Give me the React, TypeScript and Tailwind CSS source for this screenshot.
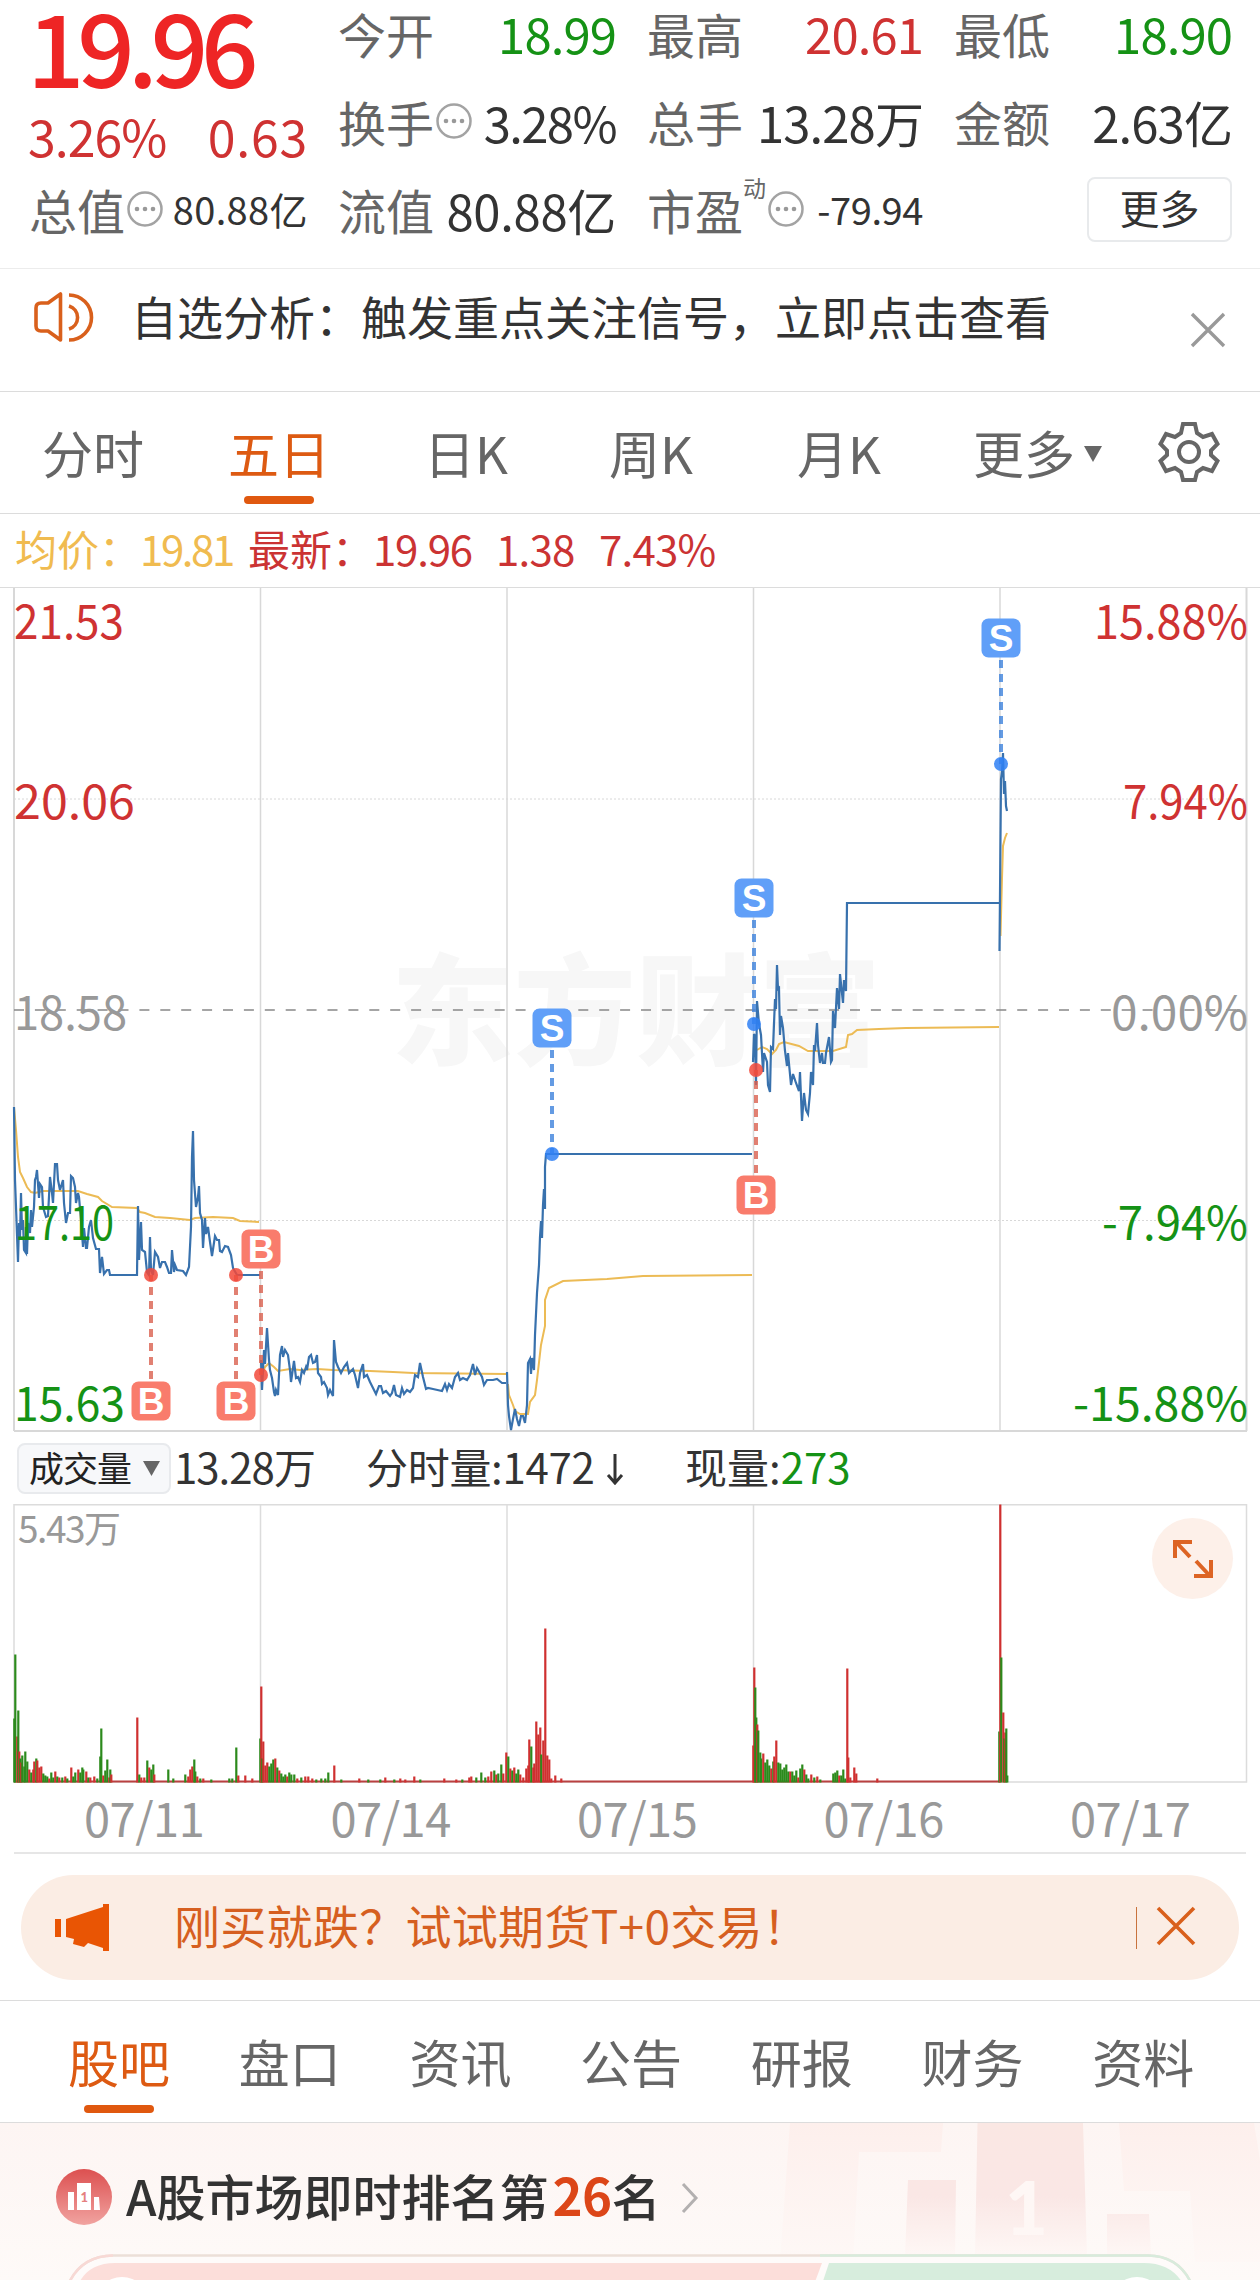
import React from 'react';
import clsx from 'clsx';

type Bar = [number, number, 'r' | 'g'];

const PRICE_LINES = [
  '14,1107 15,1180 16,1207 18,1262 19,1223 20,1237 21,1193 22,1230 23,1220 24,1250 26,1253 26,1227 27,1254 28,1223 30,1233 31,1210 32,1227 34,1207 35,1180 36,1177 37,1170 39,1198 40,1184 42,1187 43,1207 46,1217 48,1216 50,1177 52,1193 53,1203 55,1164 57,1164 58,1180 60,1190 63,1180 64,1203 66,1223 68,1213 70,1213 71,1176 73,1178 75,1187 76,1203 78,1193 79,1197 81,1220 83,1247 84,1228 86,1248 87,1248 89,1227 91,1220 93,1238 96,1249 99,1249 100,1273 102,1257 104,1274 107,1270 109,1270 110,1275 137,1275 138,1206 139,1260 141,1222 142,1250 145,1252 147,1272 149,1275 150,1237 151,1270 153,1275 155,1252 158,1257 160,1268 162,1262 165,1262 167,1267 169,1273 171,1273 172,1250 174,1272 175,1265 177,1270 183,1271 186,1275 189,1267 191,1227 192,1157 193,1131 194,1180 196,1207 198,1197 199,1186 200,1213 202,1220 203,1248 205,1218 206,1234 208,1227 210,1242 212,1256 215,1236 217,1240 219,1240 220,1251 222,1252 225,1246 228,1247 231,1255 233,1268 237,1275 260,1275',
  '261,1360 262,1390 264,1350 265,1364 267,1328 269,1360 270,1370 272,1378 274,1392 275,1396 276,1390 278,1395 280,1355 282,1346 283,1357 285,1350 288,1355 290,1370 291,1382 292,1375 294,1361 296,1378 298,1377 300,1382 302,1370 304,1373 306,1367 307,1370 309,1357 311,1355 313,1363 315,1362 317,1355 318,1373 321,1377 322,1384 324,1382 327,1388 328,1395 330,1390 333,1396 334,1340 336,1362 338,1367 341,1373 344,1367 347,1363 349,1373 353,1369 355,1375 358,1388 360,1373 363,1364 364,1377 367,1375 370,1382 373,1388 376,1394 379,1386 381,1386 383,1393 386,1391 390,1396 392,1393 394,1385 396,1395 400,1397 402,1388 404,1394 407,1390 410,1392 413,1388 415,1375 418,1377 420,1363 423,1377 426,1389 428,1388 433,1389 442,1391 445,1384 447,1390 449,1384 452,1388 455,1377 458,1373 460,1380 463,1378 467,1380 470,1375 473,1364 475,1375 477,1368 482,1377 484,1385 487,1380 493,1380 497,1379 502,1383 506,1383',
  '507,1372 508,1405 509,1416 511,1430 513,1419 515,1409 517,1419 519,1426 521,1416 523,1416 525,1423 527,1405 528,1363 530,1359 531,1374 532,1358 534,1370 535,1335 537,1293 539,1265 540,1237 541,1221 542,1238 543,1205 544,1189 545,1209 545,1167 546,1154 752,1154',
  '753,1062 754,1034 755,1036 756,1085 757,1001 759,1024 761,1035 763,1072 764,1053 767,1062 768,1085 770,1092 771,1047 773,1049 775,999 776,1009 777,965 778,989 779,988 780,1035 781,1016 783,1028 785,1051 787,1066 788,1053 791,1085 793,1074 796,1083 799,1091 800,1072 802,1121 804,1093 806,1110 808,1114 810,1093 811,1072 813,1085 814,1045 815,1051 817,1023 818,1045 820,1063 822,1053 823,1063 825,1063 826,1053 829,1037 831,1062 832,1060 833,1011 835,1028 837,988 839,1009 840,974 843,1003 844,980 846,991 847,903 999,903',
  '999.5,951 1001,779 1002,772 1003,753 1004,794 1005,781 1006,806 1007,811',
];

const AVERAGE_LINES = [
  '14,1107 16,1130 18,1157 20,1172 23,1178 27,1187 31,1192 35,1193 43,1191 78,1191 87,1194 98,1197 102,1201 112,1207 137,1208 140,1212 145,1213 155,1217 170,1218 190,1220 195,1218 213,1217 233,1218 240,1221 259,1222',
  '261,1378 265,1367 269,1363 274,1367 278,1371 290,1369 300,1370 317,1369 333,1370 370,1371 393,1372 413,1373 506,1374',
  '508,1384 509,1395 513,1405 515,1411 520,1414 528,1414 530,1402 535,1395 537,1380 541,1345 545,1326 545,1300 549,1288 563,1281 607,1279 643,1276 752,1275',
  '757,1050 762,1047 767,1049 772,1054 776,1050 779,1044 784,1042 799,1046 808,1051 833,1051 846,1047 848,1035 852,1034 857,1030 879,1029 906,1028 999,1027',
  '1000.5,936 1002,878 1003,846 1005,838 1007,833',
];

const TRADES: { side: 'B' | 'S'; x: number; badge: number; dot: number }[] = [
  { side: 'B', x: 151, badge: 1401, dot: 1275 },
  { side: 'B', x: 236, badge: 1401, dot: 1275 },
  { side: 'B', x: 261, badge: 1249, dot: 1375 },
  { side: 'S', x: 552, badge: 1028, dot: 1154 },
  { side: 'S', x: 754, badge: 898, dot: 1024 },
  { side: 'B', x: 756, badge: 1195, dot: 1070 },
  { side: 'S', x: 1001, badge: 638, dot: 764 },
];

// [text, left, baseline, width, colour]
const AXIS_LABELS: [string, number, number, number, string][] = [
  ['21.53', 14, 639, 110, '#cf3232'],
  ['20.06', 14, 819, 121, '#cf3232'],
  ['18.58', 14, 1030, 113, '#999999'],
  ['17.10', 15, 1240, 99, '#159215'],
  ['15.63', 14, 1421, 111, '#159215'],
  ['15.88%', 1094, 639, 154, '#cf3232'],
  ['7.94%', 1123, 819, 125, '#cf3232'],
  ['0.00%', 1111, 1030, 137, '#999999'],
  ['-7.94%', 1102, 1240, 146, '#159215'],
  ['-15.88%', 1073, 1421, 175, '#159215'],
];

const VOLUME: Bar[] = [
  [14, 64, 'g'], [15, 128, 'g'], [17, 46, 'r'], [18, 72, 'g'], [19, 31, 'r'], [20, 24, 'g'], [21, 20, 'r'], [22, 27, 'g'], [24, 16, 'g'], [25, 31, 'g'], [27, 21, 'g'],
  [29, 13, 'r'], [31, 10, 'g'], [33, 13, 'r'], [34, 21, 'r'], [36, 24, 'g'], [37, 22, 'r'], [39, 15, 'r'], [41, 16, 'r'], [43, 9, 'g'], [45, 7, 'g'], [47, 6, 'g'], [49, 4, 'r'],
  [51, 10, 'g'], [53, 5, 'g'], [55, 11, 'r'], [57, 6, 'g'], [59, 5, 'r'], [62, 5, 'g'], [65, 6, 'r'], [67, 4, 'g'], [71, 15, 'r'], [73, 6, 'g'], [75, 10, 'g'], [78, 13, 'r'], [80, 10, 'g'],
  [82, 15, 'g'], [83, 13, 'g'], [86, 11, 'r'], [88, 5, 'g'], [90, 5, 'r'], [94, 6, 'r'], [97, 4, 'g'], [100, 26, 'g'], [101, 54, 'g'], [103, 7, 'r'], [105, 12, 'g'], [107, 23, 'g'],
  [109, 5, 'r'], [110, 13, 'g'], [111, 8, 'r'], [137, 65, 'r'], [139, 8, 'g'], [141, 5, 'r'], [144, 5, 'r'], [147, 22, 'g'], [149, 15, 'r'], [151, 13, 'g'], [153, 18, 'g'], [154, 8, 'r'],
  [168, 13, 'g'], [173, 4, 'g'], [185, 8, 'g'], [188, 6, 'r'], [190, 13, 'r'], [192, 16, 'r'], [194, 23, 'g'], [195, 11, 'g'], [197, 6, 'r'], [200, 4, 'g'], [203, 4, 'r'], [211, 3, 'g'],
  [229, 4, 'g'], [232, 4, 'g'], [236, 35, 'g'], [238, 7, 'r'], [245, 7, 'r'], [252, 4, 'r'],
  [260, 44, 'g'], [261, 96, 'r'], [262, 24, 'g'], [263, 41, 'r'], [265, 17, 'r'], [267, 20, 'r'], [269, 16, 'g'], [271, 19, 'g'], [273, 23, 'g'], [275, 24, 'r'], [277, 15, 'g'], [279, 12, 'r'],
  [281, 9, 'g'], [283, 6, 'g'], [285, 8, 'g'], [287, 6, 'r'], [289, 10, 'g'], [291, 8, 'g'], [294, 8, 'g'], [297, 4, 'r'], [301, 5, 'g'], [305, 6, 'r'], [308, 6, 'r'], [312, 4, 'r'], [316, 3, 'g'],
  [321, 4, 'g'], [325, 4, 'g'], [328, 10, 'g'], [334, 17, 'r'], [341, 3, 'g'], [359, 4, 'r'], [368, 3, 'g'], [380, 3, 'g'], [385, 5, 'r'], [394, 3, 'g'], [400, 4, 'r'], [405, 3, 'r'],
  [414, 6, 'r'], [420, 3, 'g'], [444, 4, 'r'], [456, 3, 'r'], [462, 3, 'g'], [469, 5, 'r'], [471, 6, 'r'], [476, 5, 'g'], [481, 10, 'g'], [485, 5, 'g'], [488, 6, 'r'], [491, 11, 'r'],
  [494, 12, 'g'], [496, 8, 'r'], [498, 9, 'g'], [501, 18, 'g'], [503, 9, 'r'], [506, 30, 'r'], [508, 26, 'g'], [510, 14, 'r'], [512, 12, 'g'], [514, 15, 'r'], [516, 9, 'g'], [518, 13, 'g'],
  [520, 8, 'r'], [523, 5, 'r'], [526, 14, 'r'], [528, 17, 'r'], [529, 43, 'r'], [531, 36, 'g'], [533, 15, 'r'], [534, 19, 'r'], [536, 61, 'r'], [538, 48, 'r'], [540, 55, 'r'], [541, 28, 'g'],
  [543, 42, 'r'], [545, 154, 'r'], [547, 27, 'r'], [549, 23, 'r'], [551, 4, 'r'], [555, 7, 'r'], [561, 4, 'r'],
  [753, 37, 'r'], [754, 115, 'r'], [755, 95, 'g'], [756, 65, 'g'], [757, 58, 'r'], [758, 52, 'g'], [760, 30, 'g'], [761, 24, 'g'], [763, 29, 'r'], [765, 20, 'g'], [767, 23, 'g'], [769, 17, 'g'],
  [771, 14, 'r'], [773, 21, 'g'], [774, 26, 'r'], [776, 42, 'r'], [778, 20, 'g'], [780, 19, 'g'], [782, 13, 'g'], [784, 15, 'g'], [786, 18, 'g'], [788, 11, 'g'], [790, 11, 'r'], [792, 11, 'g'],
  [794, 7, 'g'], [796, 12, 'g'], [798, 5, 'r'], [800, 14, 'g'], [802, 18, 'g'], [804, 13, 'r'], [806, 8, 'g'], [808, 4, 'g'], [811, 8, 'r'], [814, 5, 'g'], [817, 6, 'r'], [820, 3, 'g'],
  [833, 9, 'g'], [835, 10, 'g'], [837, 12, 'g'], [839, 7, 'r'], [841, 7, 'g'], [843, 13, 'g'], [845, 4, 'g'], [847, 114, 'r'], [848, 25, 'r'], [850, 5, 'r'], [854, 15, 'r'], [856, 9, 'r'], [877, 4, 'r'],
  [999, 51, 'g'], [1000, 278, 'r'], [1001, 125, 'g'], [1003, 70, 'r'], [1004, 44, 'g'], [1005, 50, 'r'], [1006, 54, 'g'], [1007, 7, 'g'],
];

const DAY_EDGES = [260.5, 507, 753.5, 1000];
const DATES = ['07/11', '07/14', '07/15', '07/16', '07/17'];
const INFO_TABS = ['股吧', '盘口', '资讯', '公告', '研报', '财务', '资料'];

export default function App() {
  return (
    <div className="flex h-[2280px] w-[1260px] flex-col overflow-hidden bg-white font-['Noto_Sans_CJK_SC',sans-serif] text-[#333]">
      <QuoteHeader />
      <SignalBar />
      <PeriodTabs />
      <div className="flex h-[74px] items-center border-b border-[#dcdcdc] pb-[6px] pl-[15px] text-[42px] leading-none tracking-[-0.8px] whitespace-nowrap text-[#cb3333]">
        <span className="w-[125px] tracking-normal text-[#f0bb50]">均价：</span>
        <span className="w-[108px] tracking-[-2.4px] text-[#f0bb50]">19.81</span>
        <span className="w-[125px] tracking-normal">最新：</span>
        <span className="w-[123px] tracking-[-1.2px]">19.96</span>
        <span className="w-[103px]">1.38</span>
        <span>7.43%</span>
      </div>
      <PriceChart />
      <VolumeSummary />
      <VolumeChart />
      <div className="mx-[14px] flex h-[71px] items-center border-b-2 border-[#e6e6e6] pb-[3px] text-[47px] leading-none tracking-[-0.5px] text-[#999]">
        {DATES.map((date) => (
          <span key={date} className="w-[246.5px] shrink-0 pl-[70px]">{date}</span>
        ))}
      </div>
      <PromoBanner />
      <InfoTabs />
      <RankPanel />
    </div>
  );
}

function QuoteHeader() {
  return (
    <header className="flex h-[269px] shrink-0 border-b border-[#ececec] pl-[29px] leading-none">
      <div className="w-[279px]">
        <div className="-ml-[2px] flex h-[88px] items-center text-[101px] font-medium tracking-[-7.2px] text-[#ee2525]">19.96</div>
        <div className="-ml-[1px] flex h-[94px] items-center justify-between text-[50px] text-[#cf3232]">
          <span className="tracking-[-1px]">3.26%</span>
          <span className="tracking-[0.8px]">0.63</span>
        </div>
        <div className="flex h-[54px] items-center">
          <Label>总值</Label>
          <MoreDots />
          <span className="ml-auto text-[38px] tracking-[0.4px]">80.88亿</span>
        </div>
      </div>
      <div className="ml-[30px] grid h-[241px] grid-cols-[278px_276px_278px] grid-rows-[65px_112px_64px] gap-x-[31px] text-[49px]">
        <Quote label="今开" value="18.99" className="text-[#159215]" />
        <Quote label="最高" value="20.61" className="text-[#cf3232]" />
        <Quote label="最低" value="18.90" className="text-[#159215]" />
        <Quote label="换手" value="3.28%" className="tracking-[-1.6px]" dots />
        <Quote label="总手" value="13.28万" />
        <Quote label="金额" value="2.63亿" />
        <Quote label="流值" value="80.88亿" className="tracking-[-0.3px]" />
        <div className="flex items-center">
          <Label>市盈</Label>
          <span className="mb-[44px] text-[23px] text-[#666]">动</span>
          <MoreDots />
          <span className="ml-auto text-[38px] tracking-[-0.4px]">-79.94</span>
        </div>
        <button className="flex h-[65px] w-[145px] items-center justify-center self-center justify-self-end rounded-lg border-2 border-[#e8eaec] pb-[4px] text-[40px]">
          更多
        </button>
      </div>
    </header>
  );
}

function Label({ children }: { children: React.ReactNode }) {
  return <span className="text-[48px] text-[#666]">{children}</span>;
}

function Quote({ label, value, className, dots }: { label: string; value: string; className?: string; dots?: boolean }) {
  return (
    <div className="flex items-center whitespace-nowrap">
      <Label>{label}</Label>
      {dots && <MoreDots />}
      <span className={clsx('ml-auto', className, !className?.includes('tracking') && 'tracking-[-0.9px]')}>{value}</span>
    </div>
  );
}

function MoreDots() {
  return (
    <svg className="ml-[2px] h-[36px] w-[36px] shrink-0" viewBox="0 0 36 36">
      <circle cx="18" cy="18" r="16.5" fill="none" stroke="#a3a3a3" strokeWidth="2.5" />
      <g fill="#999">
        <circle cx="10" cy="18" r="2.3" />
        <circle cx="18" cy="18" r="2.3" />
        <circle cx="26" cy="18" r="2.3" />
      </g>
    </svg>
  );
}

function SignalBar() {
  return (
    <section className="flex h-[123px] shrink-0 items-center border-b border-[#dcdcdc] pl-[33px]">
      <svg className="mb-[26px] h-[52px] w-[62px]" viewBox="0 0 62 52" fill="none" stroke="#d9601c" strokeWidth="3.6">
        <path d="M27.5 3 V49 L15 40 H8 Q3 40 3 35 V17 Q3 12 8 12 H15 Z" strokeLinejoin="round" />
        <path d="M36 15 A12 12 0 0 1 36 38" />
        <path d="M36 4 A22.5 22.5 0 0 1 36 49" />
      </svg>
      <p className="mb-[31px] ml-[36px] text-[46px] leading-none">自选分析：触发重点关注信号，立即点击查看</p>
      <svg className="-mt-[1px] ml-auto mr-[33px] h-[38px] w-[38px]" viewBox="0 0 38 38" stroke="#999" strokeWidth="3.4">
        <path d="M3 3 L35 35 M35 3 L3 35" />
      </svg>
    </section>
  );
}

function PeriodTabs() {
  return (
    <nav className="flex h-[122px] shrink-0 border-b border-[#dcdcdc] pl-[42px] text-[51px] leading-none text-[#666]">
      <Tab className="w-[186px]">分时</Tab>
      <Tab className="w-[196px]" active>五日</Tab>
      <Tab className="w-[185px]">日K</Tab>
      <Tab className="w-[188px]">周K</Tab>
      <Tab className="w-[176px]">月K</Tab>
      <Tab className="w-[185px]">
        更多
        <svg className="mt-[4px] ml-[9px] h-[16px] w-[18px]" viewBox="0 0 18 16" fill="#666">
          <path d="M0 0 H18 L9 16 Z" />
        </svg>
      </Tab>
      <svg className="mt-[29px] h-[62px] w-[62px]" viewBox="0 0 62 62" fill="none" stroke="#666" strokeWidth="4">
        <path d="M25 3 H37 L39 12 L45 16 L54 13 L59.5 23 L53 29.5 V34 L59.5 40 L54 50 L45 47 L39 51 L37 59 H25 L23 51 L17 47 L8 50 L2.5 40 L9 34 V29.5 L2.5 23 L8 13 L17 16 L23 12 Z" />
        <circle cx="31" cy="31" r="10" />
      </svg>
    </nav>
  );
}

function Tab({ children, active, className }: { children: React.ReactNode; active?: boolean; className?: string }) {
  return (
    <div className={className}>
      <div className={clsx('inline-flex flex-col items-center', active && 'text-[#dd5a12]')}>
        <span className="flex h-[104px] items-center pt-[16px]">{children}</span>
        {active && <span className="h-[8px] w-[70px] rounded-full bg-[#e0580f]" />}
      </div>
    </div>
  );
}

function PriceChart() {
  return (
    <svg className="h-[844px] w-full shrink-0" viewBox="0 588 1260 844">
      <text x="391" y="1056" fontSize="120" fontWeight="900" fill="#f7f7f7" textLength="490" lengthAdjust="spacingAndGlyphs">东方财富</text>
      <g stroke="#d8d8d8" strokeWidth="1.5">
        <path d="M14 588 V1431 M1246.5 588 V1431" strokeWidth="2" />
        {DAY_EDGES.map((x) => (
          <path key={x} d={`M${x} 588 V1431`} />
        ))}
        <path d="M14 799 H1246 M14 1220.5 H1246" strokeDasharray="2 2" strokeWidth="1" />
        <path d="M14 1431 H1247" strokeWidth="2" />
      </g>
      <path d="M14 1010 H1246" stroke="#888" strokeWidth="1.6" strokeDasharray="10 10.9" />
      {AVERAGE_LINES.map((points) => (
        <polyline key={points} points={points} fill="none" stroke="#ecbb55" strokeWidth="2" />
      ))}
      {PRICE_LINES.map((points) => (
        <polyline key={points} points={points} fill="none" stroke="#3871ad" strokeWidth="2.2" />
      ))}
      {AXIS_LABELS.map(([text, x, y, width, fill]) => (
        <text key={text} x={x} y={y} fill={fill} fontSize="47" textLength={width} lengthAdjust="spacingAndGlyphs">{text}</text>
      ))}
      {TRADES.map((trade) => (
        <TradeMarker key={`${trade.x}-${trade.side}`} {...trade} />
      ))}
    </svg>
  );
}

function TradeMarker({ side, x, badge, dot }: { side: 'B' | 'S'; x: number; badge: number; dot: number }) {
  const buy = side === 'B';
  const start = badge < dot ? badge + 22 : badge - 22;
  return (
    <g>
      <path d={`M${x} ${start} V${dot}`} stroke={buy ? '#d9604f' : '#3d82dc'} strokeOpacity="0.8" strokeWidth="4" strokeDasharray="8 6" />
      <circle cx={x} cy={dot} r="7" fill={buy ? '#f2493a' : '#2f80f5'} fillOpacity="0.85" />
      <rect x={x - 19.5} y={badge - 19.5} width="39" height="39" rx="7" fill={buy ? '#f97c6c' : '#609ff8'} />
      <text x={x} y={badge + 13} fill="#fff" fontFamily="Liberation Sans, sans-serif" fontSize="37" fontWeight="700" textAnchor="middle">{side}</text>
    </g>
  );
}

function VolumeSummary() {
  return (
    <div className="flex h-[72px] shrink-0 items-center pl-[17px] text-[42px] leading-none tracking-[-0.6px]">
      <button className="flex h-[51px] w-[154px] items-center rounded-lg border-2 border-[#e8eaed] bg-[#f7f8fa] pb-[3px] pl-[10px] text-[35px] tracking-[-1px] text-[#222]">
        成交量
        <svg className="mt-[3px] ml-[12px] h-[15px] w-[17px]" viewBox="0 0 17 15" fill="#666">
          <path d="M0 0 H17 L8.5 15 Z" />
        </svg>
      </button>
      <span className="mb-[5px] ml-[3px] w-[192px] tracking-[-1px]">13.28万</span>
      <span className="mb-[5px] flex w-[319px] items-center tracking-[-0.3px]">
        分时量:1472
        <svg className="mt-[6px] ml-[11px] h-[32px] w-[18px]" viewBox="0 0 18 32" fill="none" stroke="#333" strokeWidth="3">
          <path d="M9 1 V29 M2 22 L9 30 L16 22" />
        </svg>
      </span>
      <span className="mb-[5px] tracking-normal">现量:<span className="text-[#159215]">273</span></span>
    </div>
  );
}

function VolumeChart() {
  return (
    <div className="relative h-[279px] shrink-0">
      <svg className="h-full w-full" viewBox="0 1504 1260 279">
        <g stroke="#dcdcdc" strokeWidth="1.5" fill="none">
          <path d="M14 1504.8 H1246.5 V1782 H14 Z" />
          {DAY_EDGES.map((x) => (
            <path key={x} d={`M${x} 1504 V1782`} />
          ))}
        </g>
        <path d="M14 1781.5 H1000" stroke="#b94141" strokeWidth="2" />
        {VOLUME.map(([x, height, tone]) => (
          <rect key={x} x={x - 0.8} y={1782.5 - height} width="2.2" height={height} fill={tone === 'r' ? '#cf3030' : '#2c8a1c'} />
        ))}
        <text x="18" y="1543" fontSize="37" fill="#999" textLength="103">5.43万</text>
      </svg>
      <button className="absolute top-[14px] right-[27px] flex h-[81px] w-[81px] items-center justify-center rounded-full bg-[#fdf0e9]">
        <svg className="h-[42px] w-[42px]" viewBox="0 0 42 42" fill="none" stroke="#dd6424" strokeWidth="4">
          <path d="M3 20 V4 H20 M4 4 L18 19 M39 22 V38 H22 M38 38 L24 23" />
        </svg>
      </button>
    </div>
  );
}

function PromoBanner() {
  return (
    <div className="h-[147px] shrink-0 border-b border-[#dcdcdc] px-[21px] pt-[21px]">
      <div className="flex h-[105px] items-center rounded-full bg-[#fbede4] pl-[34px] text-[#d65f20]">
        <svg className="h-[48px] w-[55px]" viewBox="0 0 55 48" fill="#e95504">
          <path d="M0 15 H6 V33 H0 Z M11 15 L48 3 V0 H54 V47 H48 V44 L33 39 L29 43 L18 40 L19 35 L11 33 Z" />
        </svg>
        <p className="mb-[7px] ml-[64px] text-[46px] leading-none tracking-[0.3px]">刚买就跌？试试期货T+0交易！</p>
        <span className="ml-auto h-[42px] w-px bg-[#c9733d]" />
        <svg className="mr-[42px] mb-[3px] ml-[18px] h-[42px] w-[42px]" viewBox="0 0 42 42" stroke="#d9601c" strokeWidth="3.6">
          <path d="M3 3 L39 39 M39 3 L3 39" />
        </svg>
      </div>
    </div>
  );
}

function InfoTabs() {
  return (
    <nav className="flex h-[122px] shrink-0 border-b border-[#dcdcdc] pl-[68px] text-[51px] leading-none text-[#666]">
      {INFO_TABS.map((name, index) => (
        <Tab key={name} active={index === 0} className="w-[170.7px] shrink-0">{name}</Tab>
      ))}
    </nav>
  );
}

function RankPanel() {
  return (
    <section className="relative h-[157px] shrink-0 bg-linear-to-b from-[#fdf5f3] to-[#fefaf8]">
      <svg className="absolute inset-0 h-full w-full" viewBox="0 2123 1260 157">
        <defs>
          <linearGradient id="podium" gradientUnits="userSpaceOnUse" x1="0" y1="2123" x2="0" y2="2256">
            <stop offset="0" stopColor="#fae7e3" />
            <stop offset="0.55" stopColor="#fae7e5" />
            <stop offset="1" stopColor="#fef7f5" />
          </linearGradient>
          <linearGradient id="laurel" x1="0" y1="0" x2="0" y2="1">
            <stop offset="0" stopColor="#fdefec" />
            <stop offset="1" stopColor="#fef8f6" />
          </linearGradient>
          <linearGradient id="medal" x1="0" y1="0" x2="0" y2="1">
            <stop offset="0" stopColor="#dc5050" />
            <stop offset="1" stopColor="#f1a3a0" />
          </linearGradient>
        </defs>
        <g fill="url(#laurel)">
          <path d="M790 2123 H943 L941 2152 H859 L853 2262 H780 Z" />
          <path d="M1119 2123 H1254 L1260 2160 V2262 H1195 L1190 2191 H1124 Z" />
        </g>
        <g fill="url(#podium)">
          <path d="M908 2180 H956 L955 2256 H905 Z" />
          <path d="M977.5 2123 H1083 L1087 2256 H975 Z" />
          <path d="M1107 2214 H1149 L1151 2256 H1107 Z" />
        </g>
        <text x="1005" y="2235" fontFamily="Lato, sans-serif" fontSize="74" fontWeight="900" fill="#fef7f5">1</text>

        <circle cx="84" cy="2197" r="28" fill="url(#medal)" />
        <path d="M68 2192 H74 V2210 H68 Z M77 2183 H91 V2210 H77 Z M94 2197 H99 L100 2210 H94 Z" fill="#fff" />
        <text x="80.5" y="2202" fontFamily="Lato, sans-serif" fontSize="13" fontWeight="900" fill="#e58080">1</text>

        <path d="M66 2290 Q78 2256 113 2255.5 H1148 Q1182 2256 1194 2290" fill="#fefbfa" stroke="#ecdfd8" strokeWidth="2.5" />
        <path d="M66 2290 Q78 2256 113 2255.5" fill="none" stroke="#f8d9d5" strokeWidth="2.5" />
        <path d="M820 2255.5 H1148 Q1182 2256 1194 2290" fill="none" stroke="#d8ebdc" strokeWidth="2.5" />
        <path d="M76 2290 Q85 2263 115 2263 H822 L812 2290 Z" fill="#fcdeda" />
        <path d="M829 2263 H1144 Q1175 2263 1186 2290 H820 Z" fill="#d7eddd" />
        <circle cx="122" cy="2304" r="27" fill="#fff" />
        <circle cx="1137" cy="2304" r="27" fill="#fff" />
      </svg>
      <div className="relative flex h-[132px] items-center pt-[10px] pl-[126px] text-[49px] leading-none font-medium">
        <span>A股市场即时排名第<b className="ml-[4px] text-[51px] tracking-[-0.5px] text-[#dc4618]">26</b>名</span>
        <svg className="mt-[7px] ml-[20px] h-[32px] w-[18px]" viewBox="0 0 18 32" fill="none" stroke="#b3b0b0" strokeWidth="3">
          <path d="M2 2 L15 16 L2 30" />
        </svg>
      </div>
    </section>
  );
}
